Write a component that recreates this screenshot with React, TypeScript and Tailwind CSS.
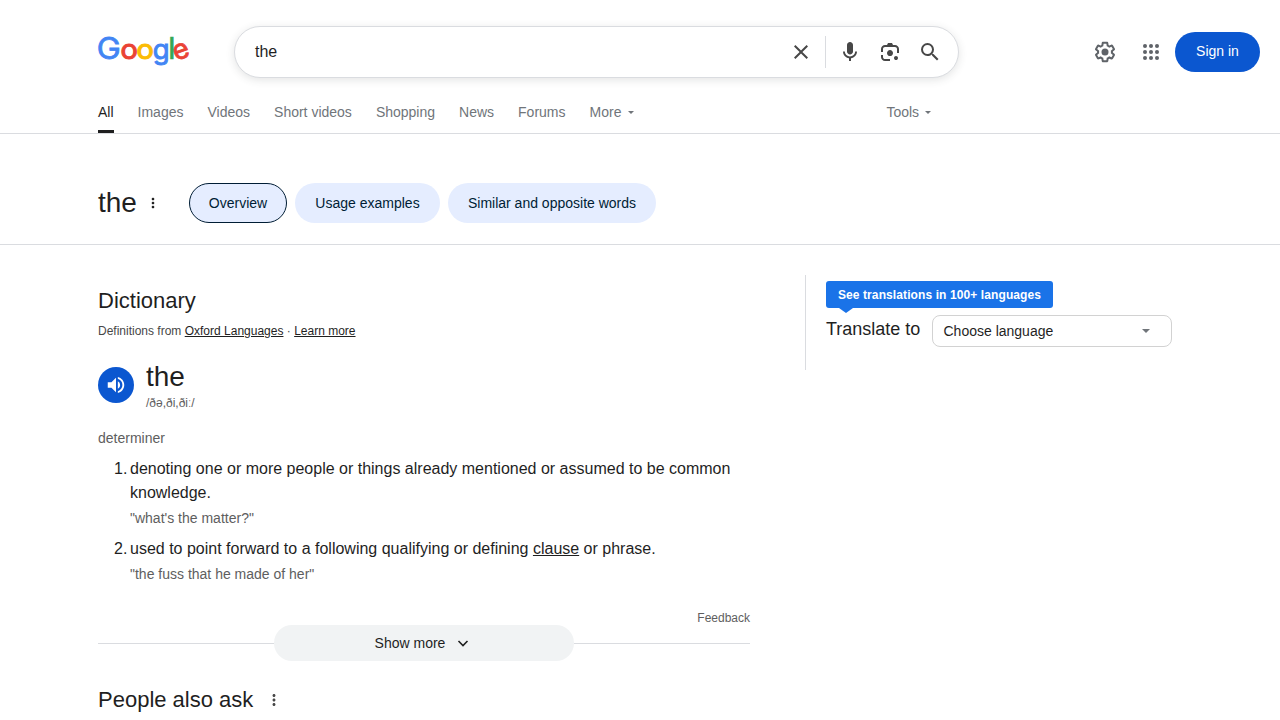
import type { ReactNode } from "react";

const SEARCH =
  "M15.5 14h-.79l-.28-.27A6.47 6.47 0 0 0 16 9.5 6.5 6.5 0 1 0 9.5 16c1.61 0 3.09-.59 4.23-1.57l.27.28v.79l5 4.99L20.49 19l-4.99-5zm-6 0C7.01 14 5 11.99 5 9.5S7.01 5 9.5 5 14 7.01 14 9.5 11.99 14 9.5 14z";
const CLOSE =
  "M19 6.41L17.59 5 12 10.59 6.41 5 5 6.41 10.59 12 5 17.59 6.41 19 12 13.41 17.59 19 19 17.59 13.41 12z";
const MORE =
  "M12 8c1.1 0 2-.9 2-2s-.9-2-2-2-2 .9-2 2 .9 2 2 2zm0 2c-1.1 0-2 .9-2 2s.9 2 2 2 2-.9 2-2-.9-2-2-2zm0 6c-1.1 0-2 .9-2 2s.9 2 2 2 2-.9 2-2-.9-2-2-2z";
const SPEAKER =
  "M3 9v6h4l5 5V4L7 9H3zm13.5 3A4.5 4.5 0 0 0 14 7.97v8.05c1.48-.73 2.5-2.25 2.5-4.02zM14 3.23v2.06c2.89.86 5 3.54 5 6.71s-2.11 5.85-5 6.71v2.06c4.01-.91 7-4.49 7-8.77s-2.99-7.86-7-8.77z";
const GEAR =
  "M13.85 22.25h-3.7c-.74 0-1.36-.54-1.45-1.27l-.27-1.89c-.27-.14-.53-.29-.79-.46l-1.8.72c-.7.26-1.47-.03-1.81-.65L2.2 15.53c-.35-.66-.2-1.44.36-1.88l1.53-1.19c-.01-.15-.02-.3-.02-.46 0-.15.01-.31.02-.46l-1.52-1.19c-.59-.45-.74-1.26-.37-1.88l1.85-3.19c.34-.62 1.11-.9 1.79-.63l1.81.73c.26-.17.52-.32.78-.46l.27-1.91c.09-.7.71-1.25 1.44-1.25h3.7c.74 0 1.36.54 1.45 1.27l.27 1.89c.27.14.53.29.79.46l1.8-.72c.71-.26 1.48.03 1.82.65l1.84 3.18c.36.66.2 1.44-.36 1.88l-1.52 1.19c.01.15.02.3.02.46s-.01.31-.02.46l1.52 1.19c.56.45.72 1.23.37 1.86l-1.86 3.22c-.34.62-1.11.9-1.8.63l-1.8-.72c-.26.17-.52.32-.78.46l-.27 1.91c-.1.68-.72 1.22-1.46 1.22zm-3.23-2h2.76l.37-2.55.53-.22c.44-.18.88-.44 1.34-.78l.45-.34 2.38.96 1.38-2.4-2.03-1.58.07-.56c.03-.26.06-.51.06-.78s-.03-.53-.06-.78l-.07-.56 2.03-1.58-1.39-2.4-2.39.96-.45-.35c-.42-.32-.87-.58-1.33-.77l-.52-.22-.37-2.55h-2.76l-.37 2.55-.53.21c-.44.19-.88.44-1.34.79l-.45.33-2.38-.95-1.39 2.39 2.03 1.58-.07.56a7 7 0 0 0-.06.79c0 .26.02.53.06.78l.07.56-2.03 1.58 1.38 2.4 2.39-.96.45.35c.43.33.86.58 1.33.77l.53.22.38 2.55z";

function Icon({ d, className }: { d: string; className: string }) {
  return (
    <svg viewBox="0 0 24 24" fill="currentColor" className={`shrink-0 ${className}`} aria-hidden="true">
      <path d={d} />
    </svg>
  );
}

function Caret({ className }: { className: string }) {
  return (
    <svg viewBox="0 0 8 4" fill="currentColor" className={`shrink-0 ${className}`} aria-hidden="true">
      <path d="M0 0h8L4 4z" />
    </svg>
  );
}

function Logo() {
  return (
    <svg width="92" height="32" viewBox="0 0 92 32" className="shrink-0 overflow-visible font-[Inter,sans-serif]" fontSize="27.5" strokeWidth="1.1">
      <text transform="translate(-1.3 24.6) scale(1.09 1)" fontSize="29.5" fill="#4285f4" stroke="#4285f4" strokeWidth=".8">G</text>
      <text transform="translate(22.4 24.6) scale(1.05 1)" fill="#ea4335" stroke="#ea4335">o</text>
      <text transform="translate(38.6 24.6) scale(1.05 1)" fill="#fbbc05" stroke="#fbbc05">o</text>
      <text transform="translate(54.7 24.6)" fill="#4285f4" stroke="#4285f4" strokeWidth=".9">g</text>
      <text transform="translate(70.2 24.6)" fontSize="29.5" fill="#34a853" stroke="#34a853" strokeWidth=".7">l</text>
      <text transform="rotate(-20 83 17.3) translate(75 24.6)" fill="#ea4335" stroke="#ea4335" strokeWidth=".9">e</text>
    </svg>
  );
}

function SearchBox() {
  return (
    <div className="ml-[46px] flex h-[52px] w-[725px] items-center rounded-full border border-[#dadce0] bg-white pl-5 text-[#474747] shadow-[0_2px_8px_rgba(60,64,67,0.14)]">
      <span className="text-base text-[#1f1f1f]">the</span>
      <Icon d={CLOSE} className="ml-auto size-6" />
      <div className="ml-3 h-8 w-px bg-[#dadce0]" />
      <svg viewBox="0 0 24 24" fill="currentColor" className="ml-3 size-6 shrink-0" aria-hidden="true">
        <path d="M12 14.500c1.660 0 3-1.310 3-2.970V5.020C15 3.340 13.660 2 12 2S9 3.340 9 5.020v6.510c0 1.660 1.340 2.970 3 2.970z" />
        <path d="M5 11.500h1.900c0 2.800 2.300 4.900 5.100 4.900s5.100-2.100 5.100-4.900H19c0 3.500-2.600 6.200-6 6.700V21h-2v-2.800c-3.400-.5-6-3.200-6-6.700z" />
      </svg>
      <svg viewBox="0 -960 960 960" fill="currentColor" className="ml-4 size-6 shrink-0" aria-hidden="true">
        <path d="M480-320q-50 0-85-35t-35-85q0-50 35-85t85-35q50 0 85 35t35 85q0 50-35 85t-85 35Zm240 160q-33 0-56.500-23.500T640-240q0-33 23.500-56.500T720-320q33 0 56.500 23.500T800-240q0 33-23.500 56.500T720-160Zm-440 40q-66 0-113-47t-47-113v-80h80v80q0 33 23.500 56.500T280-200h200v80H280Zm480-320v-160q0-33-23.500-56.500T680-680H280q-33 0-56.500 23.500T200-600v120h-80v-120q0-66 47-113t113-47h80l40-80h160l40 80h80q66 0 113 47t47 113v160h-80Z" />
      </svg>
      <Icon d={SEARCH} className="mr-4 ml-4 size-6" />
    </div>
  );
}

function Header() {
  return (
    <header className="flex h-20 items-start pt-[26px] pr-5 pl-[98px]">
      <div className="mt-2 w-[90px]"><Logo /></div>
      <SearchBox />
      <div className="mt-[6px] ml-auto flex h-10 items-center text-[#5f6368]">
        <svg viewBox="0 0 24 24" fill="currentColor" className="size-6 shrink-0" aria-hidden="true">
          <path d={GEAR} />
          <circle cx="12" cy="12" r="3.500" />
        </svg>
        <svg viewBox="0 0 24 24" fill="currentColor" className="ml-[22px] size-6" aria-hidden="true">
          {[6, 12, 18].flatMap((y) => [6, 12, 18].map((x) => <circle key={`${x}-${y}`} cx={x} cy={y} r="2" />))}
        </svg>
        <button className="ml-3 h-10 w-[85px] rounded-full bg-[#0b57d0] pb-[2px] text-sm text-white">Sign in</button>
      </div>
    </header>
  );
}

function NavTabs() {
  const tabs = ["Images", "Videos", "Short videos", "Shopping", "News", "Forums"];
  return (
    <nav className="flex h-[54px] gap-6 border-b border-[#dadce0] pt-[22px] pl-[98px] text-sm leading-5 text-[#70757a]">
      <div className="flex flex-col justify-between text-[#1f1f1f]">
        All
        <div className="h-[3px] bg-[#1f1f1f]" />
      </div>
      {tabs.map((tab) => (
        <span key={tab} className="whitespace-nowrap">{tab}</span>
      ))}
      <span className="flex h-5 items-center gap-[7px]">More<Caret className="w-[6px]" /></span>
      <span className="ml-[228px] flex h-5 items-center gap-[6px]">Tools<Caret className="w-[6px]" /></span>
    </nav>
  );
}

function Chip({ className, children }: { className: string; children: ReactNode }) {
  return (
    <button className={`h-10 rounded-full bg-[#e5edff] text-sm text-[#001d35] ${className}`}>{children}</button>
  );
}

function TopicBar() {
  return (
    <div className="flex h-[111px] items-center border-b border-[#dadce0] pt-[27px] pb-0 pl-[98px]">
      <h1 className="w-[39px] text-[28px] leading-9 text-[#1f1f1f]">the</h1>
      <Icon d={MORE} className="ml-2 size-4 text-[#1f1f1f]" />
      <div className="ml-7 flex gap-2">
        <Chip className="w-[98px] border border-[#001d35]">Overview</Chip>
        <Chip className="w-[145px]">Usage examples</Chip>
        <Chip className="w-[208px]">Similar and opposite words</Chip>
      </div>
    </div>
  );
}

function Sense({ n, example, children }: { n: number; example: string; children: ReactNode }) {
  return (
    <li className="flex pl-4">
      <span className="w-4 shrink-0 text-base leading-6">{n}.</span>
      <div>
        <p className="text-base leading-6">{children}</p>
        <p className="mt-px text-sm leading-6 text-[#5e5e5e]">{example}</p>
      </div>
    </li>
  );
}

function Dictionary() {
  return (
    <section className="w-[652px] pt-[42px]">
      <h2 className="text-[22px] leading-7">Dictionary</h2>
      <p className="mt-2 text-xs leading-4 text-[#474747]">
        Definitions from <a className="text-[#1f1f1f] underline">Oxford Languages</a> ·{" "}
        <a className="text-[#1f1f1f] underline">Learn more</a>
      </p>
      <div className="mt-5 flex">
        <div className="mt-2 flex size-9 items-center justify-center rounded-full bg-[#0b57d0] text-white">
          <Icon d={SPEAKER} className="size-[22px]" />
        </div>
        <div className="ml-3">
          <div className="text-[28px] leading-9">the</div>
          <div className="text-xs leading-4 text-[#5e5e5e]">/ðə,ði,ðiː/</div>
        </div>
      </div>
      <p className="mt-[17px] text-sm leading-5 text-[#5e5e5e]">determiner</p>
      <ol className="mt-[9px] flex flex-col gap-[7px]">
        <Sense n={1} example={'"what\'s the matter?"'}>
          denoting one or more people or things already mentioned or assumed to be common knowledge.
        </Sense>
        <Sense n={2} example={'"the fuss that he made of her"'}>
          used to point forward to a following qualifying or defining <a className="underline">clause</a> or phrase.
        </Sense>
      </ol>
      <p className="mt-6 text-right text-xs leading-4 text-[#5e5e5e]">Feedback</p>
      <div className="-mt-px flex items-center">
        <div className="h-px w-44 bg-[#dadce0]" />
        <button className="flex h-9 w-[300px] items-center justify-center gap-[10px] rounded-full bg-[#f1f3f4] pr-[2px] text-sm">
          Show more
          <svg viewBox="0 0 16 16" fill="none" stroke="currentColor" strokeWidth="1.6" className="size-4" aria-hidden="true">
            <path d="M3.500 6 8 10.500 12.500 6" />
          </svg>
        </button>
        <div className="h-px flex-1 bg-[#dadce0]" />
      </div>
      <div className="mt-[25px] flex items-center">
        <h2 className="text-[22px] leading-7">People also ask</h2>
        <Icon d={MORE} className="ml-3 size-[18px] text-[#474747]" />
      </div>
    </section>
  );
}

function Translate() {
  return (
    <aside className="mt-[30px] ml-[55px] h-[95px] border-l border-[#dadce0] pt-[6px] pl-5">
      <div className="relative flex h-[27px] w-[227px] items-center justify-center rounded-[3px] bg-[#1a73e8] text-xs font-bold tracking-[0.1px] whitespace-nowrap text-white">
        See translations in 100+ languages
        <svg viewBox="0 0 14 5" className="absolute top-full left-[13px] w-[14px] text-[#1a73e8]" fill="currentColor" aria-hidden="true">
          <path d="M0 0h14L7 5z" />
        </svg>
      </div>
      <div className="mt-[7px] flex items-center">
        <span className="w-[106px] pb-1 text-lg leading-6">Translate to</span>
        <div className="flex h-8 w-60 items-center justify-between rounded-lg border border-[#d2d2d2] pr-[21px] pl-[10.5px] text-sm">
          Choose language
          <Caret className="w-2 text-[#70757a]" />
        </div>
      </div>
    </aside>
  );
}

export default function App() {
  return (
    <div className="h-[720px] w-[1280px] overflow-hidden bg-white font-['Liberation_Sans',Arial,sans-serif] text-[#1f1f1f]">
      <Header />
      <NavTabs />
      <TopicBar />
      <main className="flex items-start pl-[98px]">
        <Dictionary />
        <Translate />
      </main>
    </div>
  );
}
